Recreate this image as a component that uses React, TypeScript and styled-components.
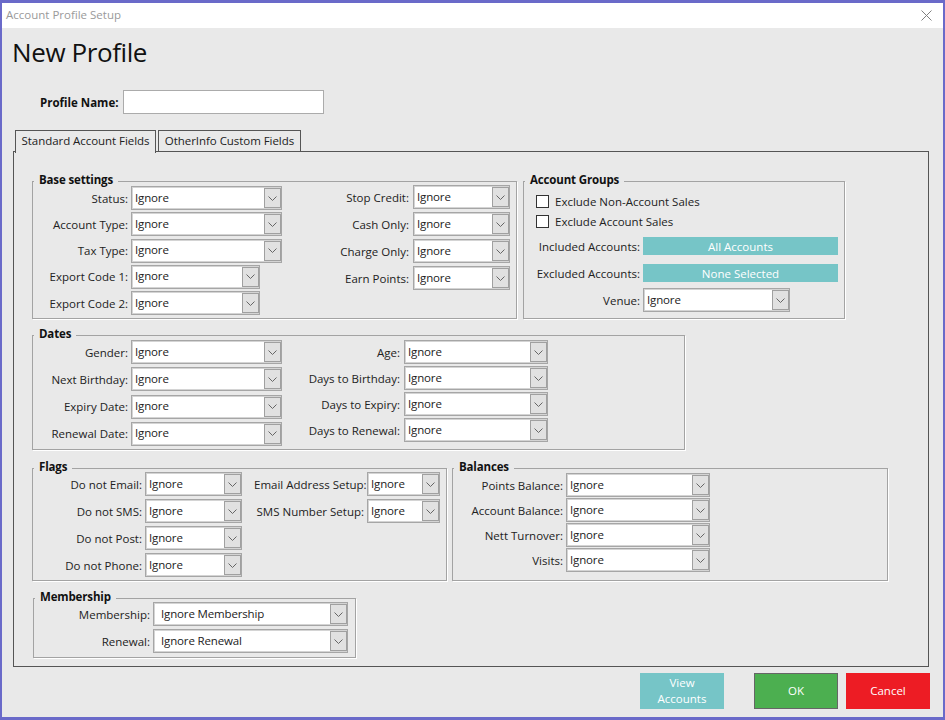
import styled, { createGlobalStyle } from 'styled-components';

const GlobalStyle = createGlobalStyle`
  html, body {
    margin: 0;
    padding: 0;
    background: #e9e9e9;
  }
  * {
    box-sizing: border-box;
  }
`;

const Chevron = () => (
  <svg width="9" height="5" viewBox="0 0 9 5" fill="none">
    <path d="M0.5 0.5 L4.5 4.5 L8.5 0.5" stroke="#666" strokeWidth="1" />
  </svg>
);

interface DropdownProps {
  value: string;
  width: number;
  inset?: number;
}

const Dropdown = ({ value, width, inset = 3 }: DropdownProps) => (
  <SelectBox $width={width} $inset={inset}>
    <SelectText>{value}</SelectText>
    <ArrowBox>
      <Chevron />
    </ArrowBox>
  </SelectBox>
);

interface FieldProps extends Partial<DropdownProps> {
  label: string;
  width: number;
}

const Field = ({ label, width, value = 'Ignore', inset }: FieldProps) => (
  <FieldRow>
    <FieldLabel>{label}</FieldLabel>
    <Dropdown value={value} width={width} inset={inset} />
  </FieldRow>
);

export default function App() {
  return (
    <>
      <GlobalStyle />
      <Window>
        <TitleBar>
          <WindowTitle>Account Profile Setup</WindowTitle>
          <svg width="11" height="11" viewBox="0 0 11 11" fill="none">
            <path d="M0.5 0.5 L10.5 10.5 M10.5 0.5 L0.5 10.5" stroke="#808080" strokeWidth="1" />
          </svg>
        </TitleBar>
        <Content>
          <Heading>New Profile</Heading>
          <NameRow>
            <NameLabel>Profile Name:</NameLabel>
            <NameInput />
          </NameRow>
          <TabStrip>
            <Tab $active>Standard Account Fields</Tab>
            <Tab>OtherInfo Custom Fields</Tab>
          </TabStrip>
          <TabPanel>
            <GroupRow>
              <Group $width={485} $height={138}>
                <Legend>Base settings</Legend>
                <GroupBody>
                  <Column $labelWidth={95} $gap={2.25} $top={0}>
                    <Field label="Status:" width={151} />
                    <Field label="Account Type:" width={151} />
                    <Field label="Tax Type:" width={151} />
                    <Field label="Export Code 1:" width={129} />
                    <Field label="Export Code 2:" width={129} />
                  </Column>
                  <Column $labelWidth={100} $gap={3} $top={-1} $left={27} $labelGap={4}>
                    <Field label="Stop Credit:" width={97} />
                    <Field label="Cash Only:" width={97} />
                    <Field label="Charge Only:" width={97} />
                    <Field label="Earn Points:" width={97} />
                  </Column>
                </GroupBody>
              </Group>
              <Group $width={322} $height={138} $left={1}>
                <Legend>Account Groups</Legend>
                <AccountBody>
                  <CheckRow>
                    <CheckBox />
                    <span>Exclude Non-Account Sales</span>
                  </CheckRow>
                  <CheckRow>
                    <CheckBox />
                    <span>Exclude Account Sales</span>
                  </CheckRow>
                  <AccountLinks>
                    <AccountRow>
                      <FieldLabel>Included Accounts:</FieldLabel>
                      <AccountButton>All Accounts</AccountButton>
                    </AccountRow>
                    <AccountRow>
                      <FieldLabel>Excluded Accounts:</FieldLabel>
                      <AccountButton>None Selected</AccountButton>
                    </AccountRow>
                    <VenueRow>
                      <FieldLabel>Venue:</FieldLabel>
                      <Dropdown value="Ignore" width={147} />
                    </VenueRow>
                  </AccountLinks>
                </AccountBody>
              </Group>
            </GroupRow>
            <GroupRow>
              <Group $width={653} $height={115}>
                <Legend>Dates</Legend>
                <GroupBody>
                  <Column $labelWidth={95} $gap={3.33} $top={0}>
                    <Field label="Gender:" width={151} />
                    <Field label="Next Birthday:" width={151} />
                    <Field label="Expiry Date:" width={151} />
                    <Field label="Renewal Date:" width={151} />
                  </Column>
                  <Column $labelWidth={100} $gap={2} $top={0} $left={18} $labelGap={4}>
                    <Field label="Age:" width={144} />
                    <Field label="Days to Birthday:" width={144} />
                    <Field label="Days to Expiry:" width={144} />
                    <Field label="Days to Renewal:" width={144} />
                  </Column>
                </GroupBody>
              </Group>
            </GroupRow>
            <GroupRow>
              <Group $width={415} $height={113}>
                <Legend>Flags</Legend>
                <GroupBody>
                  <Column $labelWidth={109} $gap={3} $top={-1}>
                    <Field label="Do not Email:" width={97} />
                    <Field label="Do not SMS:" width={97} />
                    <Field label="Do not Post:" width={97} />
                    <Field label="Do not Phone:" width={97} />
                  </Column>
                  <Column $labelWidth={110} $gap={3} $top={-1} $left={12}>
                    <Field label="Email Address Setup:" width={73} />
                    <Field label="SMS Number Setup:" width={73} />
                  </Column>
                </GroupBody>
              </Group>
              <Group $width={436} $height={113}>
                <Legend>Balances</Legend>
                <GroupBody>
                  <Column $labelWidth={110} $gap={1} $top={0}>
                    <Field label="Points Balance:" width={144} />
                    <Field label="Account Balance:" width={144} />
                    <Field label="Nett Turnover:" width={144} />
                    <Field label="Visits:" width={144} />
                  </Column>
                </GroupBody>
              </Group>
            </GroupRow>
            <GroupRow>
              <Group $width={323} $height={60} $left={1}>
                <Legend>Membership</Legend>
                <GroupBody>
                  <Column $labelWidth={116} $gap={3} $top={-1}>
                    <Field label="Membership:" width={195} value="Ignore Membership" inset={7} />
                    <Field label="Renewal:" width={195} value="Ignore Renewal" inset={7} />
                  </Column>
                </GroupBody>
              </Group>
            </GroupRow>
          </TabPanel>
          <Footer>
            <ActionButton $bg="#76c5c7">
              View
              <br />
              Accounts
            </ActionButton>
            <ActionButton $bg="#4caf50" $outlined $left={30}>
              OK
            </ActionButton>
            <ActionButton $bg="#ed1c24" $left={8}>
              Cancel
            </ActionButton>
          </Footer>
        </Content>
      </Window>
    </>
  );
}

const Window = styled.div`
  width: 945px;
  height: 720px;
  display: flex;
  flex-direction: column;
  background: #e9e9e9;
  border: solid #6a6ac9;
  border-width: 3px 2px 3px 2px;
  font-family: 'Open Sans', 'Noto Sans', sans-serif;
  font-size: 11.5px;
  color: #1a1a1a;
  overflow: hidden;
`;

const TitleBar = styled.div`
  height: 25px;
  flex: none;
  background: #fff;
  display: flex;
  align-items: center;
  justify-content: space-between;
  padding: 0 11px 0 4px;
`;

const WindowTitle = styled.div`
  padding-bottom: 2px;
  color: #9a9a9a;
`;

const Content = styled.div`
  flex: 1;
  display: flex;
  flex-direction: column;
  padding-left: 11px;
`;

const Heading = styled.h1`
  margin: 5px 0 0 -1px;
  height: 38px;
  font-size: 26px;
  line-height: 38px;
  font-weight: 400;
  letter-spacing: -0.4px;
  color: #111;
`;

const NameRow = styled.div`
  margin: 19px 0 0 27px;
  display: flex;
  align-items: center;
  gap: 5px;
`;

const NameLabel = styled.label`
  width: 78px;
  white-space: nowrap;
  font-weight: 700;
  color: #111;
`;

const NameInput = styled.div`
  width: 201px;
  height: 24px;
  background: #fff;
  border: 1px solid #ababab;
`;

const TabStrip = styled.div`
  margin: 16px 0 0 2px;
  display: flex;
  align-items: flex-end;
  gap: 2px;
  position: relative;
  z-index: 1;
`;

const Tab = styled.div<{ $active?: boolean }>`
  height: ${({ $active }) => ($active ? 23 : 22)}px;
  width: ${({ $active }) => ($active ? 141 : 143)}px;
  margin-bottom: ${({ $active }) => ($active ? -1 : 0)}px;
  padding-bottom: ${({ $active }) => ($active ? 3 : 1)}px;
  display: flex;
  align-items: center;
  justify-content: center;
  background: #e9e9e9;
  border: 1px solid #555;
  border-bottom: ${({ $active }) => ($active ? 'none' : '1px solid #555')};
  color: #222;
  letter-spacing: -0.05px;
`;

const TabPanel = styled.div`
  width: 916px;
  height: 516px;
  margin-top: -1px;
  padding: 29px 0 0 18px;
  border: 1px solid #555;
  display: grid;
  grid-template-rows: 154px 133px 130px 60px;
`;

const GroupRow = styled.div`
  display: flex;
  align-items: flex-start;
  gap: 5px;
`;

const Group = styled.section<{ $width: number; $height: number; $left?: number }>`
  width: ${({ $width }) => $width}px;
  height: ${({ $height }) => $height}px;
  margin-left: ${({ $left }) => $left ?? 0}px;
  border: 1px solid #a3a3a3;
  box-shadow: 1px 1px 0 #fff;
  display: flex;
  flex-direction: column;
`;

const Legend = styled.h2`
  margin: -8px 0 0 1px;
  padding: 0 5px;
  width: fit-content;
  height: 12px;
  font-size: 11.5px;
  line-height: 12px;
  font-weight: 700;
  color: #111;
  background: #e9e9e9;
  letter-spacing: -0.15px;
`;

const GroupBody = styled.div`
  display: flex;
  align-items: flex-start;
`;

const Column = styled.div<{
  $labelWidth: number;
  $gap: number;
  $top: number;
  $left?: number;
  $labelGap?: number;
}>`
  display: flex;
  flex-direction: column;
  gap: ${({ $gap }) => $gap}px;
  margin-top: ${({ $top }) => $top}px;
  margin-left: ${({ $left }) => $left ?? 0}px;
  --label-width: ${({ $labelWidth }) => $labelWidth}px;
  --label-gap: ${({ $labelGap }) => $labelGap ?? 3}px;
`;

const FieldRow = styled.div`
  display: flex;
  align-items: center;
  gap: var(--label-gap);
`;

const FieldLabel = styled.label`
  width: var(--label-width, auto);
  text-align: right;
  white-space: nowrap;
  color: #222;
`;

const SelectBox = styled.div<{ $width: number; $inset: number }>`
  width: ${({ $width }) => $width}px;
  height: 24px;
  flex: none;
  background: #fff;
  border: 1px solid #a6a6a6;
  box-shadow: inset 0 0 0 1px #d4d4d4;
  display: flex;
  align-items: center;
  justify-content: space-between;
  padding-left: ${({ $inset }) => $inset}px;
`;

const SelectText = styled.span`
  margin-bottom: 2px;
  color: #222;
  letter-spacing: -0.15px;
`;

const ArrowBox = styled.span`
  width: 17px;
  height: 20px;
  display: flex;
  align-items: center;
  justify-content: center;
  background: #e1e1e1;
  border: 1px solid #a0a0a0;
`;

const AccountBody = styled.div`
  display: flex;
  flex-direction: column;
  padding: 5px 0 0 12px;
`;

const CheckRow = styled.div`
  height: 20px;
  display: flex;
  align-items: center;
  gap: 6px;
  color: #222;
`;

const CheckBox = styled.span`
  width: 13px;
  height: 13px;
  background: #fff;
  border: 1px solid #333;
`;

const AccountLinks = styled.div`
  --label-width: 104px;
  margin-top: 6px;
  display: flex;
  flex-direction: column;
  gap: 9px;
`;

const AccountRow = styled.div`
  display: flex;
  align-items: center;
  gap: 3px;
`;

const VenueRow = styled(AccountRow)`
  margin-top: -3px;
`;

const AccountButton = styled.div`
  width: 195px;
  height: 18px;
  display: flex;
  align-items: center;
  justify-content: center;
  background: #76c5c7;
  color: #fff;
`;

const Footer = styled.div`
  margin: 6px 0 0 627px;
  display: flex;
`;

const ActionButton = styled.button<{ $bg: string; $outlined?: boolean; $left?: number }>`
  width: 84px;
  height: 36px;
  margin-left: ${({ $left }) => $left ?? 0}px;
  padding: 0;
  background: ${({ $bg }) => $bg};
  border: ${({ $outlined }) => ($outlined ? '1px solid #666' : 'none')};
  color: #fff;
  font: inherit;
  line-height: 16px;
`;
